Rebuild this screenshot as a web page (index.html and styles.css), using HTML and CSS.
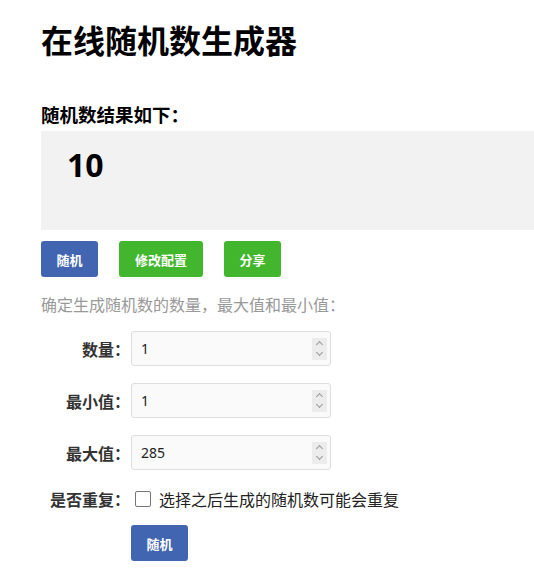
FILE: index.html
```html
<!DOCTYPE html>
<html>
<head>
    <meta charset="utf-8">
    <link rel="stylesheet" href="styles.css">
</head>
<body>
    <div class="page">
        <h1>在线随机数生成器</h1>

        <h3 class="result-title">随机数结果如下：</h3>
        <div class="result">
            <span class="result-num">10</span>
        </div>

        <div class="actions">
            <button class="btn btn-blue">随机</button>
            <button class="btn btn-green">修改配置</button>
            <button class="btn btn-green">分享</button>
        </div>

        <p class="hint">确定生成随机数的数量，最大值和最小值：</p>

        <div class="form">
            <div class="row">
                <label class="label">数量：</label>
                <div class="field">
                    <span class="value">1</span>
                    <span class="spin"><span class="up"></span><span class="down"></span></span>
                </div>
            </div>
            <div class="row">
                <label class="label">最小值：</label>
                <div class="field">
                    <span class="value">1</span>
                    <span class="spin"><span class="up"></span><span class="down"></span></span>
                </div>
            </div>
            <div class="row">
                <label class="label">最大值：</label>
                <div class="field">
                    <span class="value">285</span>
                    <span class="spin"><span class="up"></span><span class="down"></span></span>
                </div>
            </div>
            <div class="row row-check">
                <label class="label">是否重复：</label>
                <label class="check">
                    <span class="box"></span>
                    选择之后生成的随机数可能会重复
                </label>
            </div>
            <div class="row row-submit">
                <span class="label"></span>
                <button class="btn btn-blue">随机</button>
            </div>
        </div>
    </div>
</body>
</html>
```

FILE: styles.css
```css
body {
    margin: 0;
    font-family: "Noto Sans CJK SC", "Noto Sans", sans-serif;
    color: #333;
    background: #fff;
}

.page {
    padding-left: 41px;
}

h1 {
    margin: 0;
    padding-top: 16px;
    font-size: 32px;
    line-height: 46px;
    font-weight: bold;
    color: #000;
}

.result-title {
    margin: 40px 0 0;
    font-size: 18.5px;
    line-height: 24px;
    font-weight: bold;
    color: #000;
}

.result {
    margin-top: 5px;
    height: 99px;
    background-color: #f2f2f2;
    padding: 14px 26px;
    box-sizing: border-box;
}

.result-num {
    font-family: "Noto Sans", sans-serif;
    font-size: 32px;
    line-height: 40px;
    font-weight: bold;
    color: #000;
}

.actions {
    display: flex;
    gap: 21px;
    margin-top: 11px;
}

.btn {
    height: 36px;
    padding: 0 16px;
    border: none;
    border-radius: 3px;
    color: #fff;
    font-family: "Noto Sans CJK SC", sans-serif;
    font-size: 13px;
    font-weight: bold;
    cursor: pointer;
}

.btn-blue {
    background-color: #4165b0;
    width: 57px;
    padding: 0;
}

.btn-green {
    background-color: #42b62c;
}

.actions .btn-green:first-of-type {
    width: 85px;
}

.actions .btn-green:last-child {
    width: 57px;
    padding: 0;
}

.hint {
    margin: 16px 0 0;
    font-size: 16px;
    line-height: 22px;
    color: #999;
}

.form {
    margin-top: 16px;
}

.row {
    display: flex;
    align-items: center;
    gap: 1px;
    margin-bottom: 17px;
}

.label {
    width: 89px;
    text-align: right;
    font-size: 16px;
    font-weight: bold;
    color: #333;
    flex-shrink: 0;
}

.field {
    width: 200px;
    height: 35px;
    box-sizing: border-box;
    border: 1px solid #ddd;
    border-radius: 3px;
    background-color: #fafafa;
    display: flex;
    align-items: center;
    padding: 0 2px 0 9px;
}

.value {
    flex: 1;
    font-family: "Noto Sans", sans-serif;
    font-size: 14px;
    color: #222;
}

.spin {
    width: 15px;
    height: 22px;
    background-color: #ececec;
    display: flex;
    flex-direction: column;
    align-items: center;
    justify-content: center;
    gap: 3px;
    margin-right: 1px;
}

.up, .down {
    width: 4px;
    height: 4px;
    border-left: 1px solid #999;
    border-top: 1px solid #999;
}

.up {
    transform: rotate(45deg);
    margin-top: 3px;
}

.down {
    transform: rotate(225deg);
    margin-bottom: 3px;
}

.row-check {
    margin-top: 10px;
    margin-bottom: 14px;
}

.check {
    display: flex;
    align-items: center;
    gap: 8px;
    font-size: 16px;
    color: #222;
    padding-left: 4px;
}

.row-submit .label {
    width: 89px;
}

.box {
    width: 14px;
    height: 14px;
    border: 1px solid #767676;
    border-radius: 2px;
    background: #fff;
}
```
